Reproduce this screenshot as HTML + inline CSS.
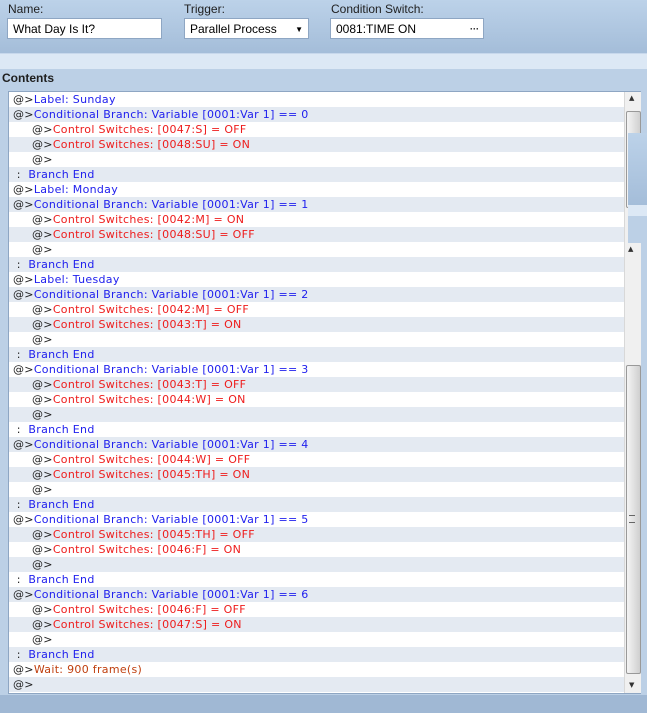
<!DOCTYPE html><html><head><style>
body{margin:0;width:647px;height:713px;overflow:hidden;background:#bcd0e6;font-family:"DejaVu Sans","Liberation Sans",sans-serif;font-size:11px;position:relative}
.top{position:absolute;left:0;top:0;width:647px;height:53px;background:linear-gradient(#bcd2e9,#a4bdd9);}
.strip{position:absolute;left:0;top:53px;width:647px;height:15px;background:#dce8f5;border-top:1px solid #c7d8ec}
.lbl{position:absolute;font-size:12px;color:#1e1e1e;font-family:"Liberation Sans",sans-serif}
.box{position:absolute;background:#fff;border:1px solid #8ea6c3;height:21px;box-sizing:border-box;font-size:12px;line-height:21px;padding-left:5px;font-family:"Liberation Sans",sans-serif}
.list{position:absolute;left:8px;top:91px;width:633px;height:603px;background:#fff;border:1px solid #8ea6c3;box-sizing:border-box;overflow:hidden}
.row{height:15px;line-height:15px;white-space:nowrap;padding-left:4px;width:612px;font-size:11px;letter-spacing:0.3px}
.row:nth-child(even){background:#e4eaf2}
.k{color:#222}.b{color:#2020ee}.r{color:#ee1c1c}.o{color:#c04010}
.i{padding-left:23px}
.sb{position:absolute;left:624px;top:92px;width:16px;height:601px;background:#f0f0f0;border-left:1px solid #d8d8d8}
.bottom{position:absolute;left:0;top:695px;width:647px;height:18px;background:#a0b8d4}
</style></head><body>
<div class="top"></div><div class="strip"></div>
<div class="lbl" style="left:8px;top:2px">Name:</div>
<div class="lbl" style="left:184px;top:2px">Trigger:</div>
<div class="lbl" style="left:331px;top:2px">Condition Switch:</div>
<div class="box" style="left:7px;top:18px;width:155px">What Day Is It?</div>
<div class="box" style="left:184px;top:18px;width:125px">Parallel Process<span style="position:absolute;right:5px;font-size:8px">▼</span></div>
<div class="box" style="left:330px;top:18px;width:154px">0081:TIME ON<span style="position:absolute;right:4px;font-size:9px;font-weight:bold">···</span></div>
<div class="lbl" style="left:2px;top:71px;font-weight:bold">Contents</div>
<div class="list">
<div class="row"><span class="k">@&gt;</span><span class="b">Label: Sunday</span></div>
<div class="row"><span class="k">@&gt;</span><span class="b">Conditional Branch: Variable [0001:Var 1] == 0</span></div>
<div class="row i"><span class="k">@&gt;</span><span class="r">Control Switches: [0047:S] = OFF</span></div>
<div class="row i"><span class="k">@&gt;</span><span class="r">Control Switches: [0048:SU] = ON</span></div>
<div class="row i"><span class="k">@&gt;</span></div>
<div class="row"><span class="k">&nbsp;:&nbsp; </span><span class="b">Branch End</span></div>
<div class="row"><span class="k">@&gt;</span><span class="b">Label: Monday</span></div>
<div class="row"><span class="k">@&gt;</span><span class="b">Conditional Branch: Variable [0001:Var 1] == 1</span></div>
<div class="row i"><span class="k">@&gt;</span><span class="r">Control Switches: [0042:M] = ON</span></div>
<div class="row i"><span class="k">@&gt;</span><span class="r">Control Switches: [0048:SU] = OFF</span></div>
<div class="row i"><span class="k">@&gt;</span></div>
<div class="row"><span class="k">&nbsp;:&nbsp; </span><span class="b">Branch End</span></div>
<div class="row"><span class="k">@&gt;</span><span class="b">Label: Tuesday</span></div>
<div class="row"><span class="k">@&gt;</span><span class="b">Conditional Branch: Variable [0001:Var 1] == 2</span></div>
<div class="row i"><span class="k">@&gt;</span><span class="r">Control Switches: [0042:M] = OFF</span></div>
<div class="row i"><span class="k">@&gt;</span><span class="r">Control Switches: [0043:T] = ON</span></div>
<div class="row i"><span class="k">@&gt;</span></div>
<div class="row"><span class="k">&nbsp;:&nbsp; </span><span class="b">Branch End</span></div>
<div class="row"><span class="k">@&gt;</span><span class="b">Conditional Branch: Variable [0001:Var 1] == 3</span></div>
<div class="row i"><span class="k">@&gt;</span><span class="r">Control Switches: [0043:T] = OFF</span></div>
<div class="row i"><span class="k">@&gt;</span><span class="r">Control Switches: [0044:W] = ON</span></div>
<div class="row i"><span class="k">@&gt;</span></div>
<div class="row"><span class="k">&nbsp;:&nbsp; </span><span class="b">Branch End</span></div>
<div class="row"><span class="k">@&gt;</span><span class="b">Conditional Branch: Variable [0001:Var 1] == 4</span></div>
<div class="row i"><span class="k">@&gt;</span><span class="r">Control Switches: [0044:W] = OFF</span></div>
<div class="row i"><span class="k">@&gt;</span><span class="r">Control Switches: [0045:TH] = ON</span></div>
<div class="row i"><span class="k">@&gt;</span></div>
<div class="row"><span class="k">&nbsp;:&nbsp; </span><span class="b">Branch End</span></div>
<div class="row"><span class="k">@&gt;</span><span class="b">Conditional Branch: Variable [0001:Var 1] == 5</span></div>
<div class="row i"><span class="k">@&gt;</span><span class="r">Control Switches: [0045:TH] = OFF</span></div>
<div class="row i"><span class="k">@&gt;</span><span class="r">Control Switches: [0046:F] = ON</span></div>
<div class="row i"><span class="k">@&gt;</span></div>
<div class="row"><span class="k">&nbsp;:&nbsp; </span><span class="b">Branch End</span></div>
<div class="row"><span class="k">@&gt;</span><span class="b">Conditional Branch: Variable [0001:Var 1] == 6</span></div>
<div class="row i"><span class="k">@&gt;</span><span class="r">Control Switches: [0046:F] = OFF</span></div>
<div class="row i"><span class="k">@&gt;</span><span class="r">Control Switches: [0047:S] = ON</span></div>
<div class="row i"><span class="k">@&gt;</span></div>
<div class="row"><span class="k">&nbsp;:&nbsp; </span><span class="b">Branch End</span></div>
<div class="row"><span class="k">@&gt;</span><span class="o">Wait: 900 frame(s)</span></div>
<div class="row"><span class="k">@&gt;</span></div>
</div>
<div class="sb">
<div style="position:absolute;top:2px;left:4px;font-size:7px;color:#333">▲</div>
<div style="position:absolute;top:19px;left:1px;width:13px;height:95px;background:linear-gradient(90deg,#f4f4f4,#d0d0d0);border:1px solid #999;border-radius:2px"></div>
<div style="position:absolute;top:273px;left:1px;width:13px;height:307px;background:linear-gradient(90deg,#f4f4f4,#cfcfcf);border:1px solid #999;border-radius:2px"></div>
<div style="position:absolute;top:423px;left:4px;width:6px;height:6px;border-top:1px solid #666;border-bottom:1px solid #666;"></div>
<div style="position:absolute;top:589px;left:4px;font-size:7px;color:#333">▼</div>
</div>
<div style="position:absolute;left:628px;top:133px;width:19px;height:72px;background:linear-gradient(#bcd2e9,#a4bdd9)"></div>
<div style="position:absolute;left:628px;top:205px;width:19px;height:11px;background:#dce8f5"></div>
<div style="position:absolute;left:628px;top:216px;width:19px;height:27px;background:#bcd0e6"></div>
<div style="position:absolute;left:628px;top:245px;font-size:7px;color:#333">▲</div>
<div class="bottom"></div>
</body></html>
